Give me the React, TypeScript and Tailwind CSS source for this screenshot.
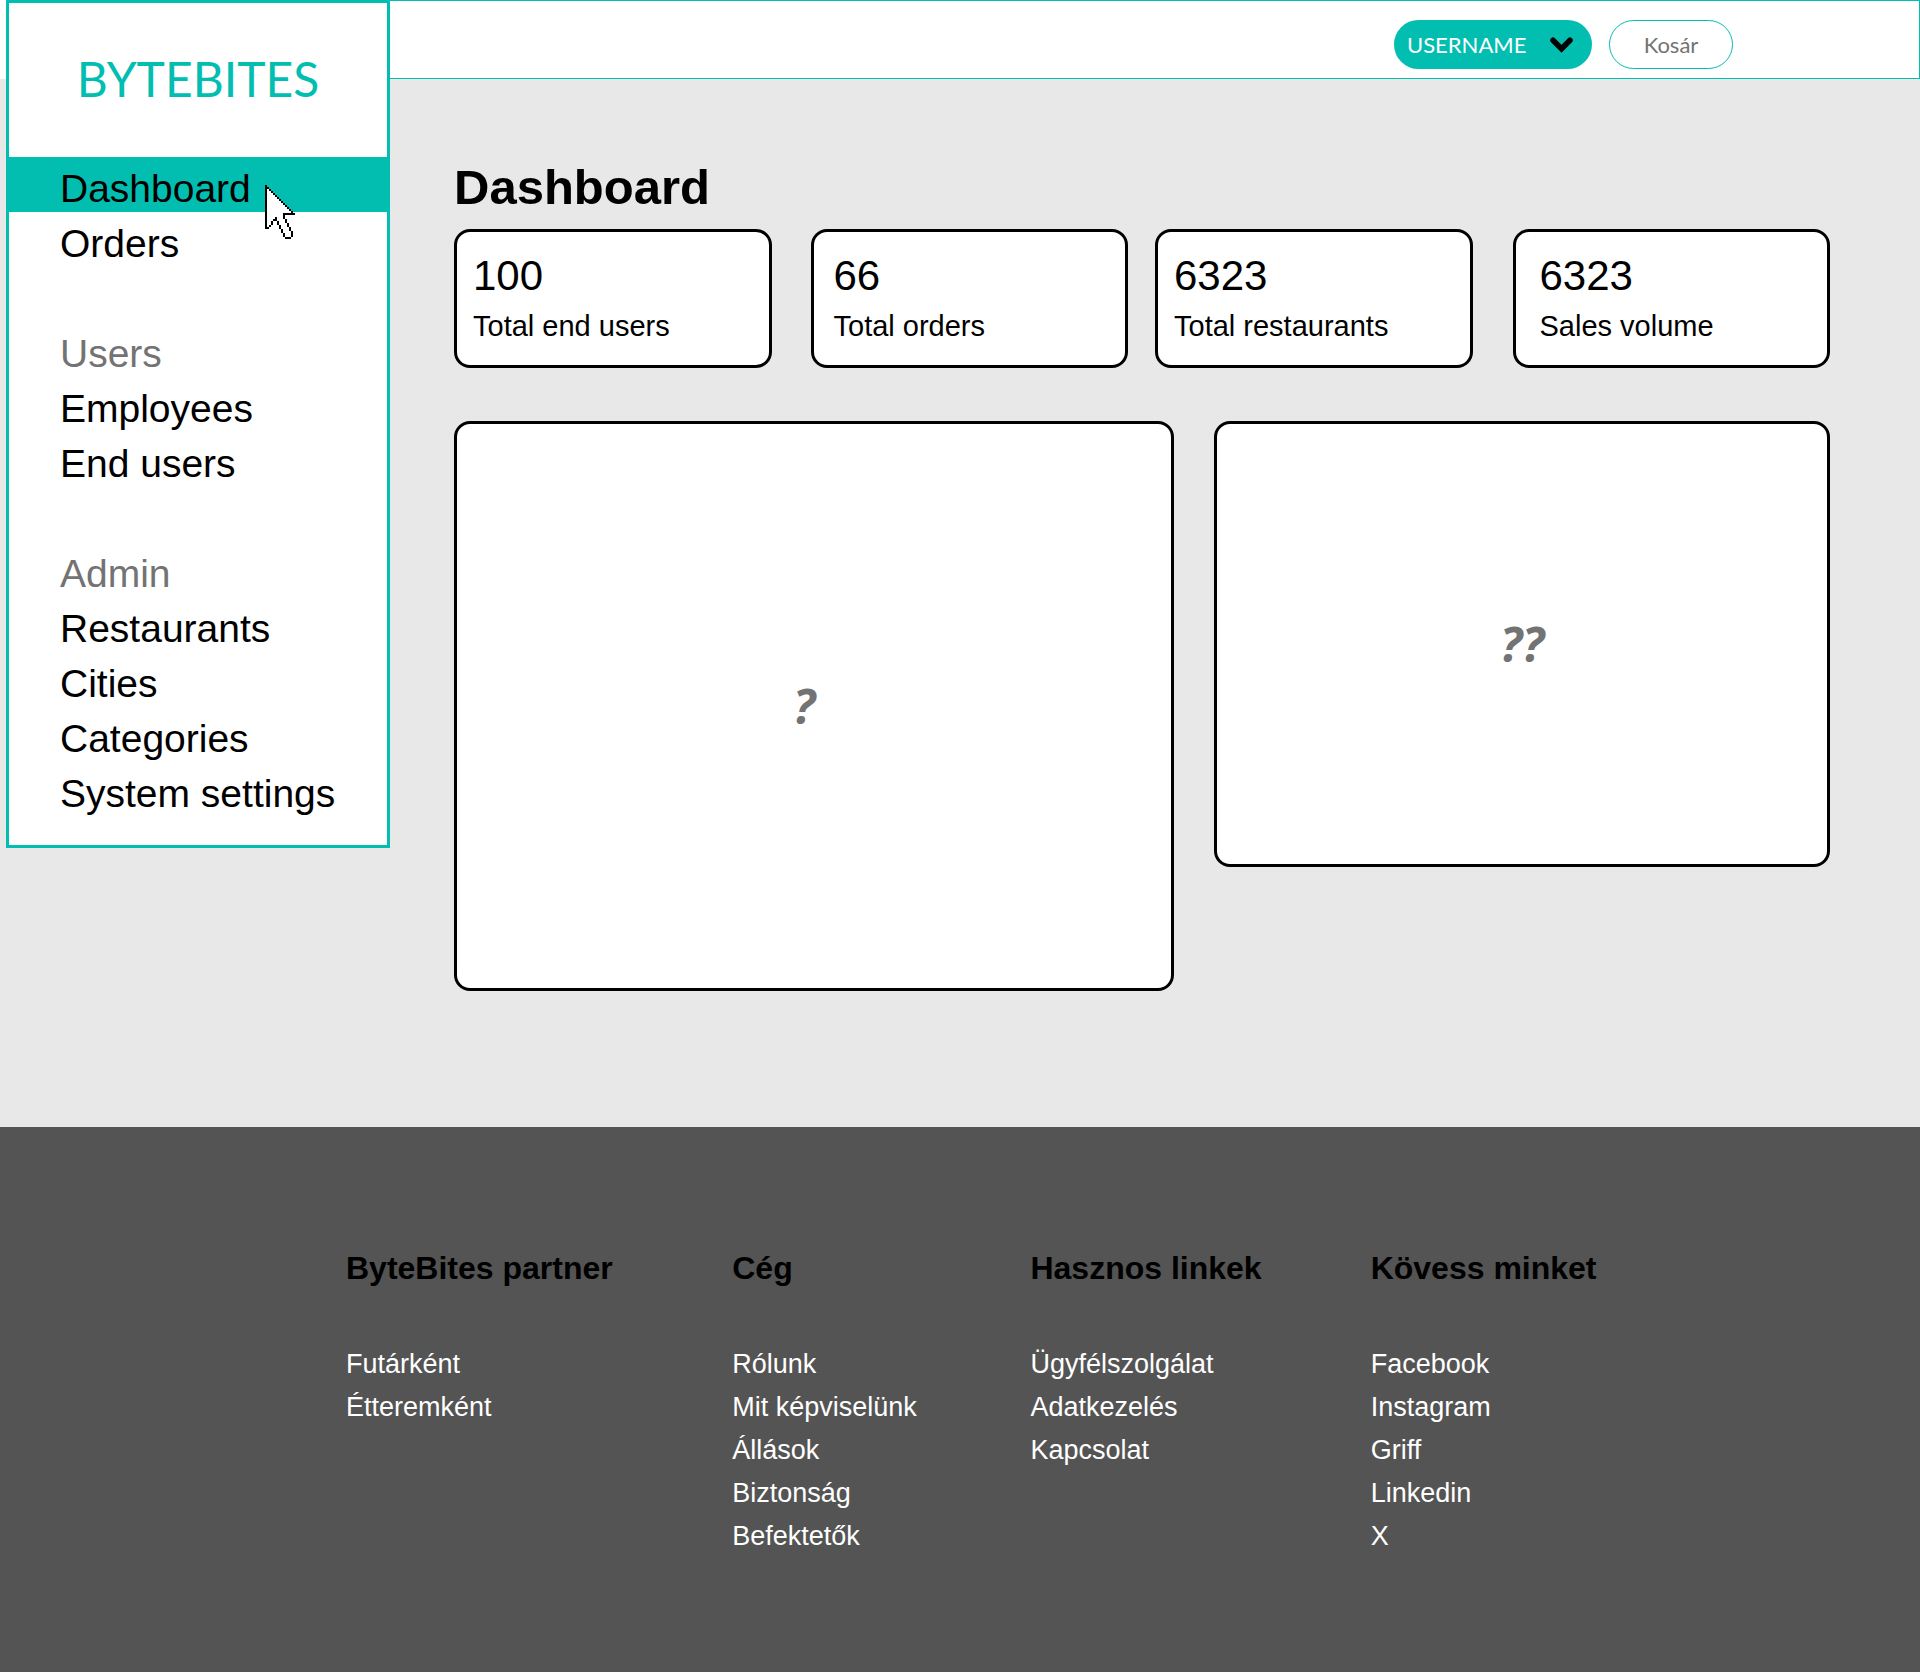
import type { ReactNode } from "react";

const navGroups = [
  { title: "", items: ["Dashboard", "Orders"] },
  { title: "Users", items: ["Employees", "End users"] },
  { title: "Admin", items: ["Restaurants", "Cities", "Categories", "System settings"] },
];

const stats = [
  { value: "100", label: "Total end users", gap: "", inset: "pl-4" },
  { value: "66", label: "Total orders", gap: "ml-[39px]", inset: "pl-5" },
  { value: "6323", label: "Total restaurants", gap: "ml-[27px]", inset: "pl-4" },
  { value: "6323", label: "Sales volume", gap: "ml-10", inset: "pl-6" },
];

const footerColumns = [
  { title: "ByteBites partner", links: ["Futárként", "Étteremként"] },
  { title: "Cég", links: ["Rólunk", "Mit képviselünk", "Állások", "Biztonság", "Befektetők"] },
  { title: "Hasznos linkek", links: ["Ügyfélszolgálat", "Adatkezelés", "Kapcsolat"] },
  { title: "Kövess minket", links: ["Facebook", "Instagram", "Griff", "Linkedin", "X"] },
];

// Pixel-art pointer: "#" is outline, "." is fill.
const pointerRows = [
  "#",
  "##",
  "#.#",
  "#..#",
  "#...#",
  "#....#",
  "#.....#",
  "#......#",
  "#.......#",
  "#........#",
  "#.........#",
  "#..........#",
  "#...........#",
  "#............#",
  "#........######",
  "#........#",
  "#....#...#",
  "#...##....#",
  "#..#..#...#",
  "#..#..#....#",
  "#.#    #...#",
  "##     #....#",
  "        #...#",
  "        #....#",
  "         #...#",
  "         #...#",
  "          ###",
];

function Pointer() {
  return (
    <svg
      aria-hidden="true"
      className="pointer-events-none absolute top-7 left-[259px] z-10"
      width="30"
      height="54"
      viewBox="0 0 15 27"
      shapeRendering="crispEdges"
    >
      {pointerRows.flatMap((row, y) =>
        row.split("").map((cell, x) =>
          cell === " " ? null : (
            <rect key={`${x}-${y}`} x={x} y={y} width="1" height="1" fill={cell === "#" ? "#000" : "#fff"} />
          ),
        ),
      )}
    </svg>
  );
}

function NavItem({ label, active }: { label: string; active: boolean }) {
  return (
    <li className={active ? "relative -mx-[3px] bg-[#02beb0] pl-[3px]" : ""}>
      <a href="#" aria-current={active ? "page" : undefined} className="block pt-2 pl-[51px] leading-[47px]">
        {label}
      </a>
      {active && <Pointer />}
    </li>
  );
}

function Sidebar() {
  return (
    <aside className="w-[384px] shrink-0 self-start border-3 border-[#02beb0] bg-white pb-7">
      <div className="flex h-[154px] items-center justify-center pb-0.5 font-['Lato'] text-[48px] text-[#02beb0]">
        BYTEBITES
      </div>
      <nav className="flex flex-col gap-[55px] text-[39px]">
        {navGroups.map((group) => (
          <div key={group.title}>
            {group.title && <h2 className="pt-2 pl-[51px] leading-[47px] text-[#737373]">{group.title}</h2>}
            <ul>
              {group.items.map((item) => (
                <NavItem key={item} label={item} active={item === "Dashboard"} />
              ))}
            </ul>
          </div>
        ))}
      </nav>
    </aside>
  );
}

function Header() {
  return (
    <header className="flex h-[79px] items-start justify-end gap-[17px] border border-l-0 border-[#02beb0] bg-white pt-[19px] pr-[186px] font-['Lato'] text-[22px]">
      <button
        type="button"
        aria-haspopup="menu"
        className="flex h-[49px] w-[198px] items-center justify-between rounded-full bg-[#02beb0] pr-[19px] pl-[13px] text-white"
      >
        USERNAME
        <svg aria-hidden="true" width="23" height="16" viewBox="0 0 23 16" fill="none">
          <path d="M3 3.2 L11.5 11.8 L20 3.2" stroke="#000" strokeWidth="5.5" strokeLinecap="round" />
        </svg>
      </button>
      <button type="button" className="h-[49px] w-[124px] rounded-full border border-[#02beb0] text-[#737373]">
        Kosár
      </button>
    </header>
  );
}

function Panel({ className, children }: { className: string; children: ReactNode }) {
  return (
    <section
      className={`flex items-center justify-center rounded-2xl border-3 border-black bg-white font-['Open_Sans'] text-[48px] font-bold text-[#737373] italic ${className}`}
    >
      {children}
    </section>
  );
}

export default function App() {
  return (
    <div className="min-h-screen bg-white font-['Liberation_Sans',sans-serif] text-black">
      <div className="flex bg-[#e8e8e8]">
        <div className="h-[79px] w-1.5 shrink-0 bg-white" />
        <Sidebar />
        <div className="min-w-0 flex-1">
          <Header />
          <main className="pt-20 pr-[90px] pb-[136px] pl-16">
            <h1 className="text-[49px] leading-[56px] font-bold">Dashboard</h1>
            <div className="mt-3.5 flex">
              {stats.map((stat) => (
                <div
                  key={stat.label}
                  className={`h-[139px] flex-1 rounded-2xl border-3 border-black bg-white pt-[18px] ${stat.gap}`}
                >
                  <div className={stat.inset}>
                    <div className="text-[42px] leading-[52px]">{stat.value}</div>
                    <div className="text-[29px] leading-[48px]">{stat.label}</div>
                  </div>
                </div>
              ))}
            </div>
            <div className="mt-[53px] grid grid-cols-[720fr_616fr] items-start gap-10">
              <Panel className="h-[570px] pr-5">?</Panel>
              <Panel className="h-[446px]">??</Panel>
            </div>
          </main>
        </div>
      </div>
      <footer className="grid grid-cols-[386fr_298fr_340fr_549fr] bg-[#545454] pt-[119px] pb-[114px] pl-[346px]">
        {footerColumns.map((column) => (
          <section key={column.title}>
            <h2 className="text-[32px] leading-[44px] font-bold">{column.title}</h2>
            <ul className="mt-[53px] text-[27px] leading-[43px] text-white">
              {column.links.map((link) => (
                <li key={link}>
                  <a href="#">{link}</a>
                </li>
              ))}
            </ul>
          </section>
        ))}
      </footer>
    </div>
  );
}
